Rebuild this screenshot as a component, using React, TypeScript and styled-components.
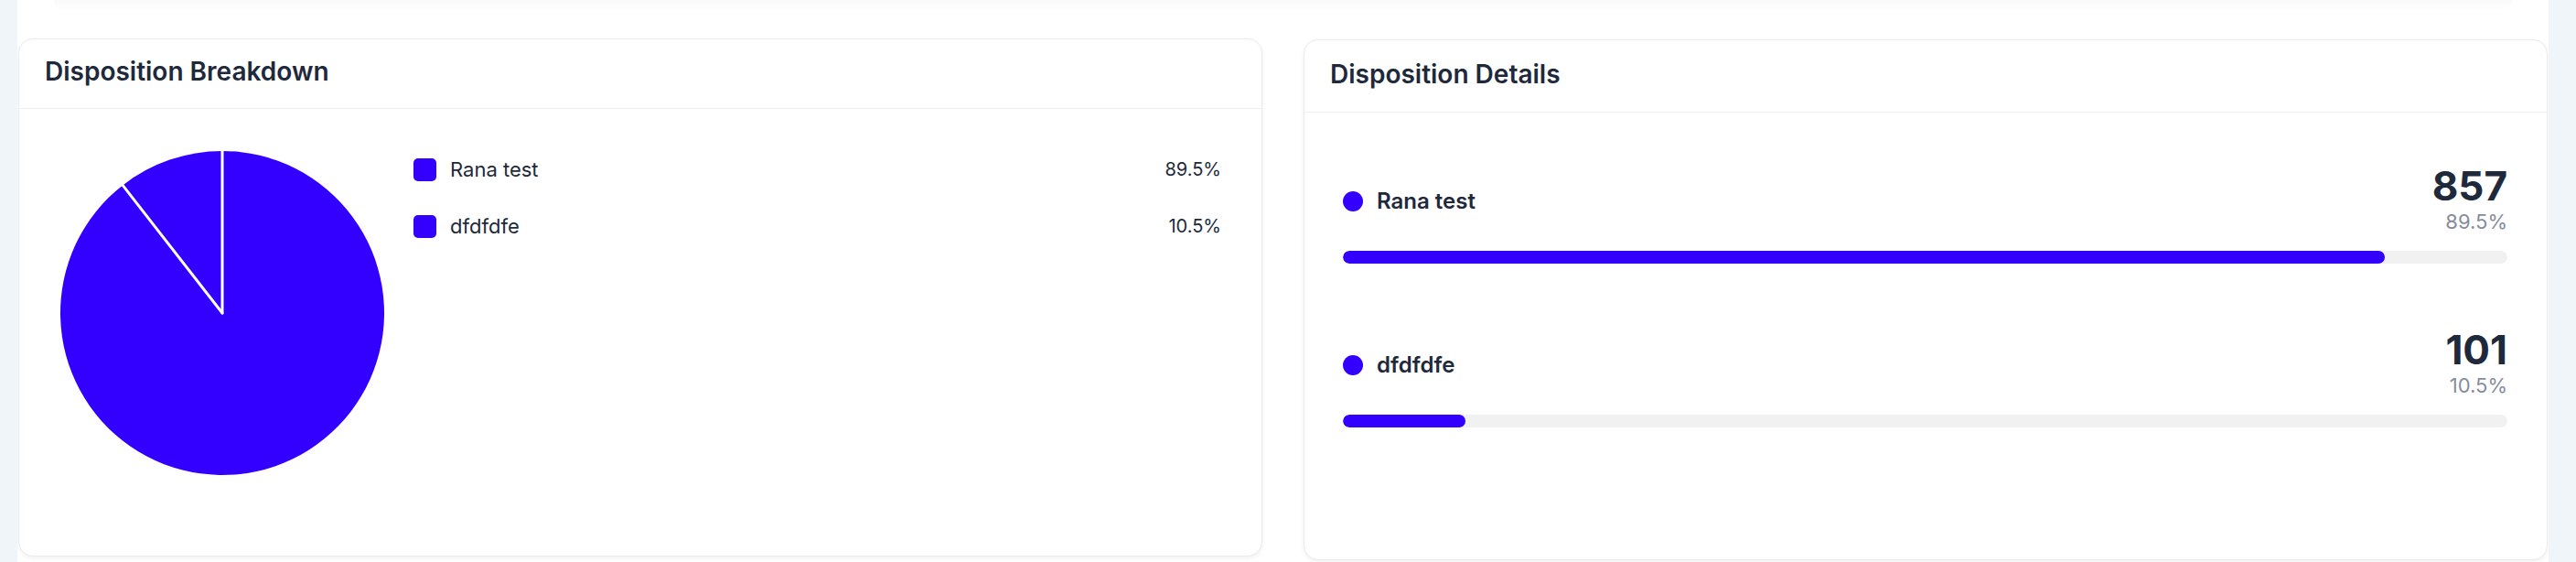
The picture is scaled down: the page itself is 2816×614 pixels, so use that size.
import React from "react";
import styled, { createGlobalStyle } from "styled-components";

const ACCENT = "#3300ff";

const GlobalStyle = createGlobalStyle`
  html, body {
    margin: 0;
    padding: 0;
    background: #f0f5fa;
    font-family: Inter, "Noto Sans", "Liberation Sans", sans-serif;
    color: #1e293b;
  }
  * { box-sizing: border-box; }
`;

const Shell = styled.main`
  margin-left: 19px;
  width: 2767px;
  height: 614px;
  background: #ffffff;
  overflow: hidden;
`;

const TopShade = styled.div`
  height: 12px;
  margin: 0 40px;
  background: linear-gradient(rgba(15, 23, 42, 0.022), rgba(15, 23, 42, 0));
  border-radius: 0 0 16px 16px;
`;

const Grid = styled.div`
  display: grid;
  grid-template-columns: 1360px 1360px;
  column-gap: 45px;
  align-items: start;
  padding: 30px 1px 0;
`;

const Card = styled.section<{ $height: number; $offset?: number }>`
  height: ${(p) => p.$height}px;
  margin-top: ${(p) => p.$offset ?? 0}px;
  background: #ffffff;
  border: 1px solid #e8ebf0;
  border-radius: 16px;
  box-shadow: 0 2px 5px rgba(15, 23, 42, 0.06);
  display: flex;
  flex-direction: column;
  overflow: hidden;
`;

const Header = styled.header<{ $height: number; $padTop: number }>`
  flex: none;
  height: ${(p) => p.$height + 1}px;
  padding: ${(p) => p.$padTop}px 28px 0;
  border-bottom: 1px solid #edf1f6;
`;

const Title = styled.h2`
  margin: 0;
  font-size: 28px;
  line-height: 36px;
  font-weight: 600;
  color: #1e293b;
  letter-spacing: 0;
`;

/* ---------- Breakdown ---------- */

const BreakdownBody = styled.div`
  display: flex;
  align-items: flex-start;
  padding: 46px 44px 0 45px;
`;

const PieBox = styled.div`
  flex: none;
  width: 354px;
  height: 354px;
`;

const Legend = styled.ul`
  flex: 1;
  list-style: none;
  margin: 7px 0 0 32px;
  padding: 0;
  display: flex;
  flex-direction: column;
  gap: 36px;
`;

const LegendRow = styled.li`
  display: flex;
  align-items: center;
  height: 26px;
`;

const Swatch = styled.span<{ $color: string }>`
  flex: none;
  width: 25px;
  height: 25px;
  border-radius: 5px;
  background: ${(p) => p.$color};
`;

const LegendLabel = styled.span`
  margin-left: 15px;
  font-size: 22px;
  line-height: 26px;
  color: #1e293b;
`;

const LegendPct = styled.span`
  margin-left: auto;
  font-size: 20px;
  line-height: 26px;
  color: #1e293b;
`;

/* ---------- Details ---------- */

const DetailsBody = styled.div`
  display: flex;
  flex-direction: column;
  gap: 72px;
  padding: 58px 43px 0 42px;
`;

const Item = styled.div`
  display: flex;
  flex-direction: column;
`;

const ItemRow = styled.div`
  display: flex;
  align-items: center;
  justify-content: space-between;
`;

const ItemName = styled.div`
  display: flex;
  align-items: center;
  gap: 15px;
  padding-top: 2px;
`;

const Dot = styled.span<{ $color: string }>`
  flex: none;
  width: 22px;
  height: 22px;
  border-radius: 50%;
  background: ${(p) => p.$color};
`;

const NameText = styled.span`
  font-size: 24px;
  line-height: 30px;
  font-weight: 600;
  color: #1e293b;
`;

const Stat = styled.div`
  display: flex;
  flex-direction: column;
  align-items: flex-end;
`;

const Count = styled.span`
  font-size: 44px;
  line-height: 44px;
  font-weight: 700;
  color: #1e293b;
`;

const Share = styled.span`
  margin-top: 3px;
  font-size: 22px;
  line-height: 28px;
  color: #858d9c;
`;

const Track = styled.div`
  margin-top: 18px;
  height: 14px;
  border-radius: 7px;
  background: #f1f1f2;
  overflow: hidden;
`;

const Fill = styled.div<{ $color: string }>`
  height: 100%;
  border-radius: 7px;
  background: ${(p) => p.$color};
`;

type Entry = { name: string; count: number; color: string };

const data: Entry[] = [
  { name: "Rana test", count: 857, color: ACCENT },
  { name: "dfdfdfe", count: 101, color: ACCENT },
];

const total = data.reduce((s, d) => s + d.count, 0);
const pct = (n: number) => ((n / total) * 100).toFixed(1) + "%";

const PieChart: React.FC<{ entries: Entry[] }> = ({ entries }) => {
  const size = 354;
  const c = size / 2;
  const r = size / 2;
  let acc = 0;
  const bounds: { x: number; y: number }[] = [];
  const slices = entries.map((e) => {
    const a0 = (acc / total) * Math.PI * 2;
    acc += e.count;
    const a1 = (acc / total) * Math.PI * 2;
    const p0 = { x: c + r * Math.sin(a0), y: c - r * Math.cos(a0) };
    const p1 = { x: c + r * Math.sin(a1), y: c - r * Math.cos(a1) };
    bounds.push(p0);
    const large = a1 - a0 > Math.PI ? 1 : 0;
    const d = `M ${c} ${c} L ${p0.x} ${p0.y} A ${r} ${r} 0 ${large} 1 ${p1.x} ${p1.y} Z`;
    return <path key={e.name} d={d} fill={e.color} />;
  });
  return (
    <svg width={size} height={size} viewBox={`0 0 ${size} ${size}`}>
      {slices}
      {bounds.map((p, i) => (
        <line
          key={i}
          x1={c}
          y1={c}
          x2={p.x}
          y2={p.y}
          stroke="#ffffff"
          strokeWidth={3}
          strokeLinecap="round"
        />
      ))}
    </svg>
  );
};

export default function App() {
  return (
    <>
      <GlobalStyle />
      <Shell>
        <TopShade />
        <Grid>
          <Card $height={566}>
            <Header $height={75} $padTop={17}>
              <Title>Disposition Breakdown</Title>
            </Header>
            <BreakdownBody>
              <PieBox>
                <PieChart entries={data} />
              </PieBox>
              <Legend>
                {data.map((d) => (
                  <LegendRow key={d.name}>
                    <Swatch $color={d.color} />
                    <LegendLabel>{d.name}</LegendLabel>
                    <LegendPct>{pct(d.count)}</LegendPct>
                  </LegendRow>
                ))}
              </Legend>
            </BreakdownBody>
          </Card>
          <Card $height={569} $offset={1}>
            <Header $height={78} $padTop={19}>
              <Title>Disposition Details</Title>
            </Header>
            <DetailsBody>
              {data.map((d) => (
                <Item key={d.name}>
                  <ItemRow>
                    <ItemName>
                      <Dot $color={d.color} />
                      <NameText>{d.name}</NameText>
                    </ItemName>
                    <Stat>
                      <Count>{d.count}</Count>
                      <Share>{pct(d.count)}</Share>
                    </Stat>
                  </ItemRow>
                  <Track>
                    <Fill
                      $color={d.color}
                      style={{ width: `${(d.count / total) * 100}%` }}
                    />
                  </Track>
                </Item>
              ))}
            </DetailsBody>
          </Card>
        </Grid>
      </Shell>
    </>
  );
}
